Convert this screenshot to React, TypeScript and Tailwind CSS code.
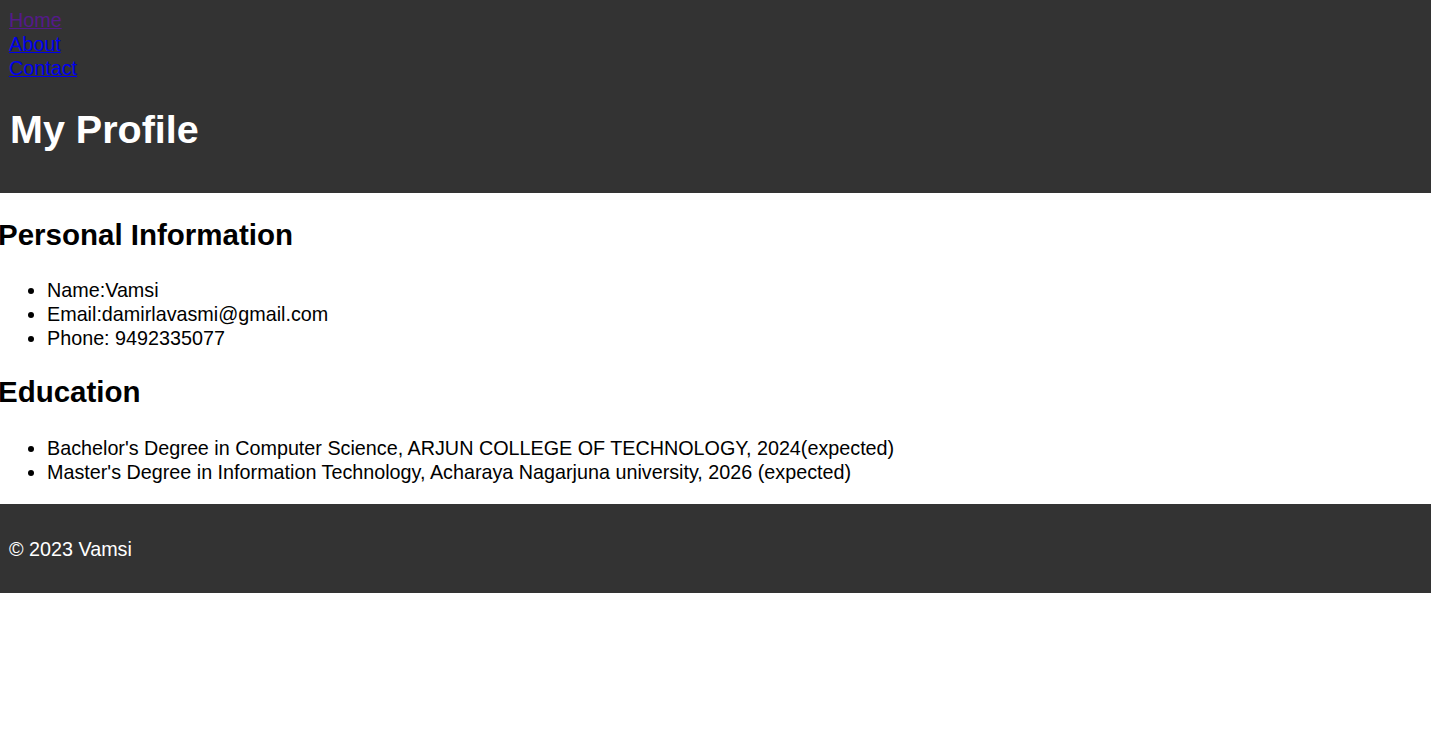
export default function App() {
  const links = [
    { label: "Home", visited: true },
    { label: "About", visited: false },
    { label: "Contact", visited: false },
  ];

  return (
    <div className="min-h-[754px] bg-white font-['Liberation_Sans',Arial,sans-serif] text-[19.75px] leading-[24px] text-black">
      <header className="bg-[#333333] px-[9px] pt-2 pb-[41px]">
        <nav>
          <ul className="list-none">
            {links.map((l) => (
              <li key={l.label}>
                <a
                  href="#"
                  className={
                    l.visited
                      ? "text-[#551a8b] underline"
                      : "text-[#0000ee] underline"
                  }
                >
                  {l.label}
                </a>
              </li>
            ))}
          </ul>
        </nav>
        <h1 className="mt-[26px] ml-px text-[39.5px] leading-[46px] font-bold text-white">
          My Profile
        </h1>
      </header>

      <main className="pb-5">
        <section>
          <h2 className="-ml-[2px] mt-[25px] text-[29.5px] leading-[34px] font-bold">
            Personal Information
          </h2>
          <ul className="mt-[26px] list-disc pl-[47px]">
            <li>Name:Vamsi</li>
            <li>Email:damirlavasmi@gmail.com</li>
            <li>Phone: 9492335077</li>
          </ul>
        </section>
        <section>
          <h2 className="-ml-[2px] mt-[25px] text-[29.5px] leading-[34px] font-bold">
            Education
          </h2>
          <ul className="mt-[27px] list-disc pl-[47px]">
            <li>
              Bachelor's Degree in Computer Science, ARJUN COLLEGE OF
              TECHNOLOGY, 2024(expected)
            </li>
            <li>
              Master's Degree in Information Technology, Acharaya Nagarjuna
              university, 2026 (expected)
            </li>
          </ul>
        </section>
      </main>

      <footer className="bg-[#333333] px-[9px] pt-[33px] pb-[32px] text-white">
        <p>© 2023 Vamsi</p>
      </footer>
    </div>
  );
}
